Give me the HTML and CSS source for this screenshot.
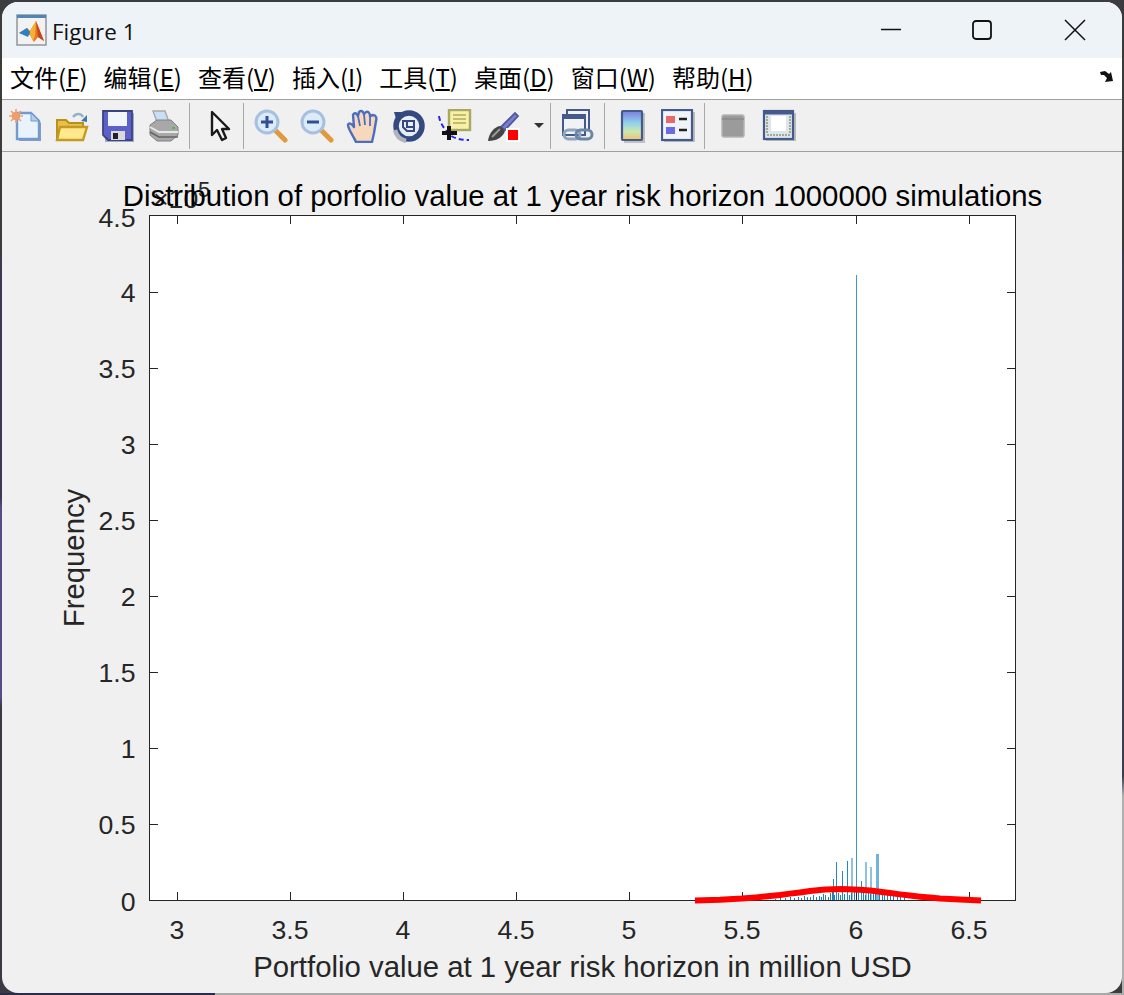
FILE: index.html
```html
<!DOCTYPE html>
<html lang="en">
<head>
  <meta charset="UTF-8" />
  <title>Figure 1</title>
  <link rel="stylesheet" href="styles.css">
</head>
<body>
  <main class="window">
    <header class="titlebar">
      <svg class="app-icon" width="32" height="32" viewBox="0 0 32 32">
        <rect x="1" y="1" width="29" height="30" fill="#f2f2f2" stroke="#8a8f96" stroke-width="1.4"/>
        <rect x="1" y="1" width="29" height="3" fill="#4f86b8"/>
        <path d="M3 19 L11 14 L14 17 L20 7 L28 27 L22 23 L18 28 L14 21 Z" fill="#e8762b"/>
        <path d="M20 7 L28 27 L22 23 Z" fill="#c9431f"/>
        <path d="M14 17 L20 7 L19 22 L17 27 L14 21 Z" fill="#f3b32f"/>
        <path d="M3 19 L11 14 L14 18 L12 23 Z" fill="#2f7fc4"/>
      </svg>
      <span class="title-text">Figure 1</span>
      <div class="win-controls">
        <svg class="win-btn win-min" width="22" height="22" viewBox="0 0 22 22"><path d="M1 10.5 H21" fill="none" stroke="#111" stroke-width="1.6"/></svg>
        <svg class="win-btn" width="22" height="22" viewBox="0 0 22 22"><rect x="2" y="2" width="18" height="18" rx="3" fill="none" stroke="#111" stroke-width="1.8"/></svg>
        <svg class="win-btn" width="22" height="22" viewBox="0 0 22 22"><path d="M1 1 L21 21 M21 1 L1 21" fill="none" stroke="#111" stroke-width="1.5"/></svg>
      </div>
    </header>

    <nav class="menubar">
      <span class="menu-item">文件(<u>F</u>)</span>
      <span class="menu-item">编辑(<u>E</u>)</span>
      <span class="menu-item">查看(<u>V</u>)</span>
      <span class="menu-item">插入(<u>I</u>)</span>
      <span class="menu-item">工具(<u>T</u>)</span>
      <span class="menu-item">桌面(<u>D</u>)</span>
      <span class="menu-item">窗口(<u>W</u>)</span>
      <span class="menu-item">帮助(<u>H</u>)</span>
      <svg class="dock-arrow" width="16" height="14" viewBox="0 0 16 14"><path d="M1 2 L6 1 L10 4 L12 2 L14 11 L6 12 L8 8 L5 5 L2 5 Z" fill="#111"/></svg>
    </nav>

    <div class="toolbar">
      <div class="tool-group group-file">
        <span class="tool"><svg width="34" height="34" viewBox="0 0 34 34">
          <path d="M10 6 H24 L32 14 V32 H10 Z" fill="#8c9cc0"/>
          <path d="M8 4 H22 L30 12 V30 H8 Z" fill="#eaf3fc" stroke="#6f9bd0" stroke-width="2.4"/>
          <path d="M22 4 V12 H30 Z" fill="#b8cce6" stroke="#6f9bd0" stroke-width="1"/>
          <circle cx="7" cy="7" r="4" fill="#f08a50"/>
          <path d="M7 0 V14 M0 7 H14 M2 2 L12 12 M12 2 L2 12" stroke="#f0a070" stroke-width="1.6"/>
        </svg></span>
        <span class="tool"><svg width="34" height="34" viewBox="0 0 34 34">
          <path d="M18 8 C21 4 26 4 28 8" fill="none" stroke="#9ab0c8" stroke-width="2.4"/>
          <path d="M26 12 L32 6 L32 13 Z" fill="#3f78b0"/>
          <path d="M2 11 H11 L14 14 H28 V31 H2 Z" fill="#e8c048" stroke="#b8901e" stroke-width="2"/>
          <path d="M2 31 L5 18 H32 L28 31 Z" fill="#ffe98c" stroke="#c49a22" stroke-width="2.4"/>
        </svg></span>
        <span class="tool"><svg width="34" height="34" viewBox="0 0 34 34">
          <rect x="4" y="4" width="29" height="29" fill="#a3abc2"/>
          <path d="M2 2 H31 V31 H7 L2 26 Z" fill="#5c60c8" stroke="#3b4480" stroke-width="1.8"/>
          <rect x="7" y="3" width="19" height="14" fill="#f2f4fb"/>
          <rect x="10" y="22" width="14" height="9" fill="#d8d8de"/>
          <rect x="12" y="24" width="5" height="6" fill="#222"/>
        </svg></span>
        <span class="tool"><svg width="34" height="34" viewBox="0 0 34 34">
          <path d="M6 2 H18 L22 13 H10 Z" fill="#c8e0f4" stroke="#a8a8a8" stroke-width="1.4"/>
          <path d="M3 16 L10 11 H24 L31 18 V26 L24 32 H10 L3 26 Z" fill="#a8a8a8" stroke="#808080" stroke-width="1"/>
          <path d="M3 18 L12 23 H31" fill="none" stroke="#e8e8e8" stroke-width="2"/>
          <path d="M3 23 L12 28 H31" fill="none" stroke="#666" stroke-width="1.6"/>
          <rect x="25" y="18" width="3" height="2" fill="#58b058"/>
        </svg></span>
      </div>
      <span class="tool-sep"></span>
      <div class="tool-group group-pointer">
        <span class="tool"><svg width="34" height="34" viewBox="0 0 34 34">
          <path d="M9 3 V26 L14 21 L19 31 L23 29 L19 20 L26 20 Z" fill="#f4f4f4" stroke="#1a1a1a" stroke-width="2.4" stroke-linejoin="round"/>
        </svg></span>
      </div>
      <span class="tool-sep"></span>
      <div class="tool-group group-view">
        <span class="tool"><svg width="34" height="34" viewBox="0 0 34 34">
          <path d="M21 21 L31 31" stroke="#e09a3c" stroke-width="5" stroke-linecap="round"/>
          <circle cx="13" cy="13" r="11" fill="#dcebf8" stroke="#a8c0e0" stroke-width="3"/>
          <path d="M7 13 H19 M13 7 V19" stroke="#2f4f96" stroke-width="3"/>
        </svg></span>
        <span class="tool"><svg width="34" height="34" viewBox="0 0 34 34">
          <path d="M21 21 L31 31" stroke="#e09a3c" stroke-width="5" stroke-linecap="round"/>
          <circle cx="13" cy="13" r="11" fill="#dcebf8" stroke="#a8c0e0" stroke-width="3"/>
          <path d="M7 13 H19" stroke="#2f4f96" stroke-width="3"/>
        </svg></span>
        <span class="tool"><svg width="34" height="34" viewBox="0 0 34 34">
          <path d="M10 33 C8 28 2 20 2 16 C3 13 6 15 8 18 L7 6 C8 3 11 4 12 7 L13 3 C15 1 17 2 18 5 L20 3 C22 2 24 4 24 7 L27 6 C30 6 31 9 30 12 L28 24 L26 33 Z" fill="#f8d8bc" stroke="#4a6ec0" stroke-width="2.4" stroke-linejoin="round"/>
          <path d="M12 7 L14 17 M18 5 L19 16 M24 7 L24 17" stroke="#4a6ec0" stroke-width="1.8" fill="none"/>
        </svg></span>
        <span class="tool"><svg width="34" height="34" viewBox="0 0 34 34">
          <circle cx="17" cy="17" r="13" fill="#e8eef6" stroke="#33497f" stroke-width="5.5"/>
          <path d="M2 3 L13 3 L5 13 Z" fill="#33497f"/>
          <path d="M3 21 A15 15 0 0 0 14 32" fill="none" stroke="#b0b4bc" stroke-width="4.5"/>
          <path d="M11 12 H22 V22 H15 L11 18 Z M15 12 V18 H22" fill="none" stroke="#33497f" stroke-width="2"/>
        </svg></span>
        <span class="tool"><svg width="34" height="34" viewBox="0 0 34 34">
          <rect x="11" y="1" width="21" height="20" fill="#f8f0a8" stroke="#a8a860" stroke-width="2.4"/>
          <path d="M15 6 H28 M15 10 H28 M15 14 H28" stroke="#c0bc70" stroke-width="2"/>
          <path d="M1 7 C2 15 8 22 12 26 C17 30 24 31 31 31" fill="none" stroke="#2828e0" stroke-width="2" stroke-dasharray="5 3"/>
          <path d="M11 17 V31 M4 24 H19" stroke="#111" stroke-width="4"/>
        </svg></span>
        <span class="tool tool-brush"><svg width="34" height="34" viewBox="0 0 34 34">
          <path d="M14 18 L28 4 L31 7 L18 21 Z" fill="#7a80d0" stroke="#5058a0" stroke-width="1.8"/>
          <path d="M1 32 C2 24 7 18 13 17 L18 22 C16 28 10 32 1 32 Z" fill="#444"/>
          <path d="M5 28 L13 20" stroke="#999" stroke-width="2"/>
          <rect x="19" y="19" width="14" height="14" fill="#fff"/>
          <rect x="21" y="21" width="10" height="10" fill="#f00"/>
        </svg></span>
        <span class="tool-drop"></span>
      </div>
      <span class="tool-sep"></span>
      <div class="tool-group group-link">
        <span class="tool"><svg width="34" height="34" viewBox="0 0 34 34">
          <rect x="6" y="1" width="22" height="20" fill="#f0f2f6" stroke="#44598c" stroke-width="2"/>
          <rect x="2" y="6" width="22" height="20" fill="#f0f2f6" stroke="#44598c" stroke-width="2"/>
          <path d="M2 8 H24" stroke="#44598c" stroke-width="4"/>
          <rect x="3" y="21" width="16" height="9" rx="4.5" fill="none" stroke="#8ea4c0" stroke-width="3"/>
          <rect x="15" y="21" width="16" height="9" rx="4.5" fill="none" stroke="#6c86a8" stroke-width="3"/>
        </svg></span>
      </div>
      <span class="tool-sep"></span>
      <div class="tool-group group-insert">
        <span class="tool"><svg width="34" height="34" viewBox="0 0 34 34">
          <defs>
            <linearGradient id="cbar" x1="0" y1="0" x2="0" y2="1">
              <stop offset="0" stop-color="#7a7ce0"/>
              <stop offset="0.4" stop-color="#90d0ec"/>
              <stop offset="0.7" stop-color="#c8e8b0"/>
              <stop offset="1" stop-color="#f4c070"/>
            </linearGradient>
          </defs>
          <rect x="9" y="4" width="21" height="30" fill="#c0c0c0"/>
          <rect x="7" y="2" width="20" height="29" rx="1" fill="url(#cbar)" stroke="#44598c" stroke-width="2.2"/>
        </svg></span>
        <span class="tool"><svg width="34" height="34" viewBox="0 0 34 34">
          <rect x="3" y="3" width="31" height="30" fill="#bcbcbc"/>
          <rect x="1" y="1" width="30" height="30" fill="#f0f3f8" stroke="#44598c" stroke-width="2.2"/>
          <rect x="5" y="7" width="9" height="7" fill="#e66a6a"/>
          <rect x="5" y="18" width="9" height="7" fill="#6a6ae6"/>
          <path d="M18 10 H26 M18 21 H26" stroke="#222" stroke-width="2.5"/>
        </svg></span>
      </div>
      <span class="tool-sep"></span>
      <div class="tool-group group-plot">
        <span class="tool"><svg width="34" height="34" viewBox="0 0 34 34">
          <rect x="6" y="6" width="22" height="22" rx="2" fill="#9b9b9b" stroke="#b4b4b4" stroke-width="1.5"/>
          <path d="M6 10 H28" stroke="#8a8a8a" stroke-width="1.5"/>
        </svg></span>
        <span class="tool"><svg width="34" height="34" viewBox="0 0 34 34">
          <rect x="4" y="4" width="30" height="28" fill="#bcbcbc"/>
          <rect x="2" y="2" width="29" height="28" fill="#dfe5ef" stroke="#44598c" stroke-width="2.2"/>
          <path d="M2 4 H31" stroke="#44598c" stroke-width="3"/>
          <rect x="9" y="7" width="15" height="15" fill="#fff"/>
          <path d="M5 7 V24 M28 7 V24 M5 26 H28" stroke="#a8a890" stroke-width="2" stroke-dasharray="2 1"/>
        </svg></span>
      </div>
    </div>

    <section class="figure">
      <svg class="plot" width="1120" height="841" viewBox="2 152 1120 841">
        <rect class="axes-bg" x="149.5" y="215.5" width="866" height="685"/>

        <g class="hist">
          <path class="bar-main" d="M856.5 900 V275"/>
          <path class="bar-mid" d="M836.5 900 V862 M842.5 900 V871 M847.5 900 V861 M861.5 900 V881 M833.5 900 V879"/>
          <path class="bar-soft" d="M852 900 V858 M866 900 V862 M871 900 V867"/>
          <path class="bar-wide" d="M877.5 900 V854"/>
          <path class="bar-small" d="M775.5 900 V899 M780.5 900 V898 M785.5 900 V898 M790.5 900 V897 M794.5 900 V898 M798.5 900 V897 M801.5 900 V898 M804.5 900 V896 M807.5 900 V897 M810.5 900 V897 M813.5 900 V895 M816.5 900 V897 M819.5 900 V896 M821.5 900 V897 M823.5 900 V894 M825.5 900 V895 M828.5 900 V897 M830.5 900 V893 M832.5 900 V891 M834.5 900 V895 M838.5 900 V893 M840.5 900 V895 M844.5 900 V894 M849.5 900 V895 M851.5 900 V893 M854.5 900 V891 M858.5 900 V892 M863.5 900 V893 M865.5 900 V895 M868.5 900 V892 M870.5 900 V894 M873.5 900 V892 M875.5 900 V890 M879.5 900 V891 M882.5 900 V894 M884.5 900 V893 M887.5 900 V892 M890.5 900 V895 M893.5 900 V894 M897.5 900 V896 M900.5 900 V895 M904.5 900 V897"/>
        </g>

        <rect class="axes-box" x="149.5" y="215.5" width="866" height="685"/>
        <path class="ticks" d="M177.5 900 V892 M290.5 900 V892 M403.5 900 V892 M516.5 900 V892 M629.5 900 V892 M742.5 900 V892 M856.5 900 V892 M969.5 900 V892
          M177.5 216 V224 M290.5 216 V224 M403.5 216 V224 M516.5 216 V224 M629.5 216 V224 M742.5 216 V224 M856.5 216 V224 M969.5 216 V224
          M150 824.5 H158 M150 748.5 H158 M150 672.5 H158 M150 596.5 H158 M150 520.5 H158 M150 444.5 H158 M150 368.5 H158 M150 292.5 H158
          M1015 824.5 H1007 M1015 748.5 H1007 M1015 672.5 H1007 M1015 596.5 H1007 M1015 520.5 H1007 M1015 444.5 H1007 M1015 368.5 H1007 M1015 292.5 H1007"/>

        <polyline class="fit" points="695,900.5 720,899.8 742,898.6 756,897.4 770,896 780,895 790,893.6 800,892.4 810,891 825,889.6 842,889 860,889.8 870,890.6 880,891.7 890,893 900,894.4 910,895.6 920,896.7 930,897.6 940,898.4 960,899.4 981,900.5"/>

        <g class="tick-labels y-labels">
          <text x="135.5" y="227">4.5</text>
          <text x="135.5" y="302">4</text>
          <text x="135.5" y="378">3.5</text>
          <text x="135.5" y="454">3</text>
          <text x="135.5" y="530">2.5</text>
          <text x="135.5" y="606">2</text>
          <text x="135.5" y="682">1.5</text>
          <text x="135.5" y="758">1</text>
          <text x="135.5" y="834">0.5</text>
          <text x="135.5" y="911">0</text>
        </g>
        <g class="tick-labels x-labels">
          <text x="177" y="939">3</text>
          <text x="290" y="939">3.5</text>
          <text x="403" y="939">4</text>
          <text x="516" y="939">4.5</text>
          <text x="629" y="939">5</text>
          <text x="742" y="939">5.5</text>
          <text x="856" y="939">6</text>
          <text x="969" y="939">6.5</text>
        </g>

        <text class="exponent" x="153" y="208">×10</text>
        <text class="exponent-power" x="198" y="197">5</text>
        <text class="plot-title" x="582.5" y="206">Distribution of porfolio value at 1 year risk horizon 1000000 simulations</text>
        <text class="axis-label" x="582.5" y="977">Portfolio value at 1 year risk horizon in million USD</text>
        <text class="axis-label" transform="translate(84 558) rotate(-90)">Frequency</text>
      </svg>
    </section>
  </main>
</body>
</html>
```

FILE: styles.css
```css
html, body {
  margin: 0;
  height: 100%;
  overflow: hidden;
}

/* desktop showing round the window: left edge, right edge, bottom edge */
body {
  background-color: #3b3b42;
  background-image:
    linear-gradient(to right, #2c2b4a 0, #2c2b4a 215px, #a9a9a9 215px),
    linear-gradient(to bottom, #3c3c3a 0, #3c3c3a 25%, #3a3a50 26%, #3a3a50 50%, #564d88 51%, #564d88 70%, #3a3a46 71%),
    linear-gradient(to bottom, #3a3a3a 0, #3a3a3a 25%, #3d3b50 26%, #3d3b50 78%, #b0b0b0 80%);
  background-size: 100% 2px, 2px 100%, 2px 100%;
  background-position: left bottom, left top, right top;
  background-repeat: no-repeat;
}

.window {
  width: 1120px;
  height: 991px;
  margin: 2px;
  border-radius: 16px;
  overflow: hidden;
  display: flex;
  flex-direction: column;
  background-color: #f0f0f0;
}

/* Title bar */
.titlebar {
  height: 56px;
  flex: none;
  display: flex;
  align-items: center;
  background-color: #eef3f8;
  font-family: "Open Sans", "Noto Sans", sans-serif;
  color: #111;
}

.app-icon {
  margin-left: 14px;
}

.title-text {
  margin-left: 4px;
  padding-top: 2px;
  font-size: 22.4px;
}

.win-controls {
  margin-left: auto;
  margin-right: 36px;
  display: flex;
  gap: 71px;
}

.win-min {
  margin-right: -2px;
}

/* Menu bar */
.menubar {
  height: 38px;
  flex: none;
  display: flex;
  align-items: center;
  gap: 16px;
  padding-left: 8px;
  padding-bottom: 3px;
  background-color: #fff;
  border-bottom: 1px solid #a0a0a0;
  font-family: "Noto Sans CJK SC", "Noto Sans", sans-serif;
  font-size: 24px;
  color: #000;
}

.menu-item {
  white-space: nowrap;
  line-height: 34px;
}

.dock-arrow {
  margin-left: auto;
  margin-right: 7px;
}

/* Toolbar */
.toolbar {
  height: 51px;
  flex: none;
  display: flex;
  align-items: center;
  padding-left: 1px;
  background-color: #f0f0f0;
  border-bottom: 1px solid #a0a0a0;
}

.tool-group {
  display: flex;
  align-items: center;
}

.group-file { padding-right: 2px; }
.group-pointer { padding-left: 7px; }
.group-view { padding-left: 4px; padding-right: 6px; }
.group-link { padding-left: 4px; padding-right: 3px; }
.group-insert { padding-left: 4px; padding-right: 3px; }
.group-plot { padding-left: 5px; }

.tool {
  width: 46px;
  height: 46px;
  display: flex;
  align-items: center;
  justify-content: center;
}

/* the originals are small bitmaps scaled up, so soften the edges a little */
.tool svg {
  filter: blur(0.5px);
}

.tool-brush {
  margin-left: 3px;
}

.tool-drop {
  width: 0;
  height: 0;
  margin-left: 7px;
  border-left: 5px solid transparent;
  border-right: 5px solid transparent;
  border-top: 5px solid #333;
}

.tool-sep {
  width: 1px;
  height: 46px;
  background-color: #a8a8a8;
}

/* Plot area */
.figure {
  flex: 1;
  min-height: 0;
}

.plot {
  display: block;
  font-family: "Liberation Sans", Arial, sans-serif;
}

.axes-bg {
  fill: #fff;
}

.axes-box, .ticks {
  fill: none;
  stroke: #262626;
  stroke-width: 1;
}

.hist path {
  fill: none;
  stroke: #0072bd;
}

.bar-main { stroke-width: 1; opacity: 0.75; }
.bar-mid { stroke-width: 1; opacity: 0.85; }
.bar-soft { stroke-width: 1.6; opacity: 0.55; }
.bar-wide { stroke-width: 3; opacity: 0.55; }
.bar-small { stroke-width: 1; opacity: 0.9; }

.fit {
  fill: none;
  stroke: #ff0000;
  stroke-width: 6;
}

.tick-labels text {
  font-size: 26.67px;
  fill: #262626;
}

.y-labels text { text-anchor: end; }
.x-labels text { text-anchor: middle; }

.exponent {
  font-size: 26.67px;
  fill: #262626;
}

.exponent-power {
  font-size: 22px;
  fill: #262626;
}

.plot-title {
  font-size: 29.33px;
  fill: #000;
  text-anchor: middle;
}

.axis-label {
  font-size: 29.33px;
  fill: #262626;
  text-anchor: middle;
}
```
